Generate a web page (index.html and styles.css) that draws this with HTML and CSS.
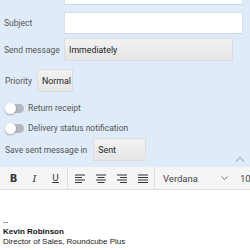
FILE: index.html
```html
<!DOCTYPE html>
<html lang="en">
<head>
    <meta charset="UTF-8">
    <meta name="viewport" content="width=device-width, initial-scale=1.0">
    <title>Compose</title>
    <link rel="stylesheet" href="styles.css">
</head>
<body>
    <div class="options">
        <div class="row row-first">
            <span class="label"></span>
            <input class="text-input" type="text">
        </div>
        <div class="row row-subject">
            <span class="label">Subject</span>
            <input class="text-input" type="text">
        </div>
        <div class="row row-send">
            <span class="label">Send message</span>
            <div class="select wide">Immediately</div>
        </div>
        <div class="row row-priority">
            <span class="label-inline">Priority</span>
            <div class="select small">Normal</div>
        </div>
        <div class="row row-toggle">
            <span class="toggle"></span>
            <span class="toggle-text">Return receipt</span>
        </div>
        <div class="row row-toggle second">
            <span class="toggle"></span>
            <span class="toggle-text">Delivery status notification</span>
        </div>
        <div class="row row-save">
            <span class="label-inline">Save sent message in</span>
            <div class="select folder">Sent</div>
            <svg class="collapse" width="10" height="6" viewBox="0 0 10 6">
                <path d="M1 5.5 L5 1.5 L9 5.5" fill="none" stroke="#7a8796" stroke-width="1"/>
            </svg>
        </div>
    </div>

    <div class="toolbar">
        <span class="tool bold">B</span>
        <span class="tool italic">I</span>
        <span class="tool underline">U</span>
        <span class="sep"></span>
        <span class="tool">
            <svg width="10" height="9" viewBox="0 0 10 9"><path d="M0 1h10M0 3.5h7M0 6h10M0 8.5h7" stroke="#333" stroke-width="1.2"/></svg>
        </span>
        <span class="tool">
            <svg width="10" height="9" viewBox="0 0 10 9"><path d="M0 1h10M1.5 3.5h7M0 6h10M1.5 8.5h7" stroke="#333" stroke-width="1.2"/></svg>
        </span>
        <span class="tool">
            <svg width="10" height="9" viewBox="0 0 10 9"><path d="M0 1h10M3 3.5h7M0 6h10M3 8.5h7" stroke="#333" stroke-width="1.2"/></svg>
        </span>
        <span class="tool">
            <svg width="10" height="9" viewBox="0 0 10 9"><path d="M0 1h10M0 3.5h10M0 6h10M0 8.5h10" stroke="#333" stroke-width="1.2"/></svg>
        </span>
        <span class="sep"></span>
        <span class="font-name">Verdana</span>
        <svg class="chevron" width="7" height="4" viewBox="0 0 7 4"><path d="M0.5 0.5 L3.5 3.5 L6.5 0.5" fill="none" stroke="#777" stroke-width="1"/></svg>
        <span class="font-size">10</span>
    </div>

    <div class="editor">
        <div class="sig-dash">--</div>
        <div class="sig-name">Kevin Robinson</div>
        <div class="sig-title">Director of Sales, Roundcube Plus</div>
    </div>
</body>
</html>
```

FILE: styles.css
```css
* {
    margin: 0;
    padding: 0;
    box-sizing: border-box;
}

html, body {
    height: 250px;
    overflow: hidden;
}

body {
    font-family: Roboto, 'Noto Sans', sans-serif;
    font-size: 8.5px;
    color: #555;
    background-color: #dfebf8;
    white-space: nowrap;
}

.options {
    padding: 0 17px 0 4px;
}

.row {
    display: flex;
    align-items: center;
}

.label {
    width: 60px;
    flex-shrink: 0;
}

.text-input {
    flex: 1;
    height: 22px;
    border: 1px solid #d6e0eb;
    border-bottom-color: #cdd9e6;
    background: #fff;
    outline: none;
}

.row-first {
    margin-top: -17px;
}

.row-subject {
    margin-top: 7px;
}

.row-send {
    margin-top: 4px;
}

.select {
    height: 23px;
    display: flex;
    align-items: center;
    padding-left: 4px;
    color: #222;
    font-size: 8.8px;
    background: linear-gradient(#f2f2f2, #e6e6e6);
    border: 1px solid #dcdcdc;
}

.select.wide {
    flex: 1;
}

.row-priority {
    margin-top: 8px;
}

.label-inline {
    padding-left: 1px;
}

.select.small {
    margin-left: 5px;
    width: 36px;
}

.row-toggle {
    margin-top: 10px;
    height: 12px;
    padding-left: 2px;
}

.row-toggle.second {
    margin-top: 8px;
}

.toggle {
    position: relative;
    width: 18px;
    height: 9px;
    border-radius: 5px;
    background: #b4b8bd;
}

.toggle::after {
    content: "";
    position: absolute;
    left: -1px;
    top: -1px;
    width: 11px;
    height: 11px;
    border-radius: 50%;
    background: #fff;
    box-shadow: 0 1px 2px rgba(0, 0, 0, 0.3);
}

.toggle-text {
    margin-left: 4px;
}

.row-save {
    margin-top: 4px;
    margin-right: -17px;
}

.select.folder {
    margin-left: 6px;
    width: 53px;
}

.collapse {
    margin-left: auto;
    margin-right: 5px;
    align-self: flex-end;
    margin-bottom: -1px;
}

.toolbar {
    margin-top: 6px;
    height: 23px;
    display: flex;
    align-items: center;
    background: #f5f5f5;
    border-bottom: 1px solid #dedede;
    color: #333;
}

.tool {
    width: 21px;
    display: flex;
    justify-content: center;
    font-family: 'DejaVu Sans', sans-serif;
    font-size: 10px;
}

.tool:first-child {
    margin-left: 3px;
}

.bold {
    font-weight: bold;
}

.italic {
    font-family: 'DejaVu Serif', serif;
    font-style: italic;
}

.underline {
    text-decoration: underline;
    font-size: 9px;
}

.sep {
    width: 1px;
    height: 23px;
    background: #dcdcdc;
    margin: 0 1px;
}

.font-name {
    margin-left: 7px;
    font-size: 9.5px;
    color: #444;
}

.chevron {
    margin-left: auto;
    margin-right: 12px;
}

.font-size {
    font-size: 9.5px;
    color: #444;
    width: 10px;
}

.editor {
    background: #fff;
    height: 70px;
    padding: 27px 3px 0;
    font-family: 'Liberation Sans', Arial, sans-serif;
    font-size: 8px;
    line-height: 10px;
    color: #222;
}

.sig-name {
    font-weight: bold;
    color: #111;
}
```
